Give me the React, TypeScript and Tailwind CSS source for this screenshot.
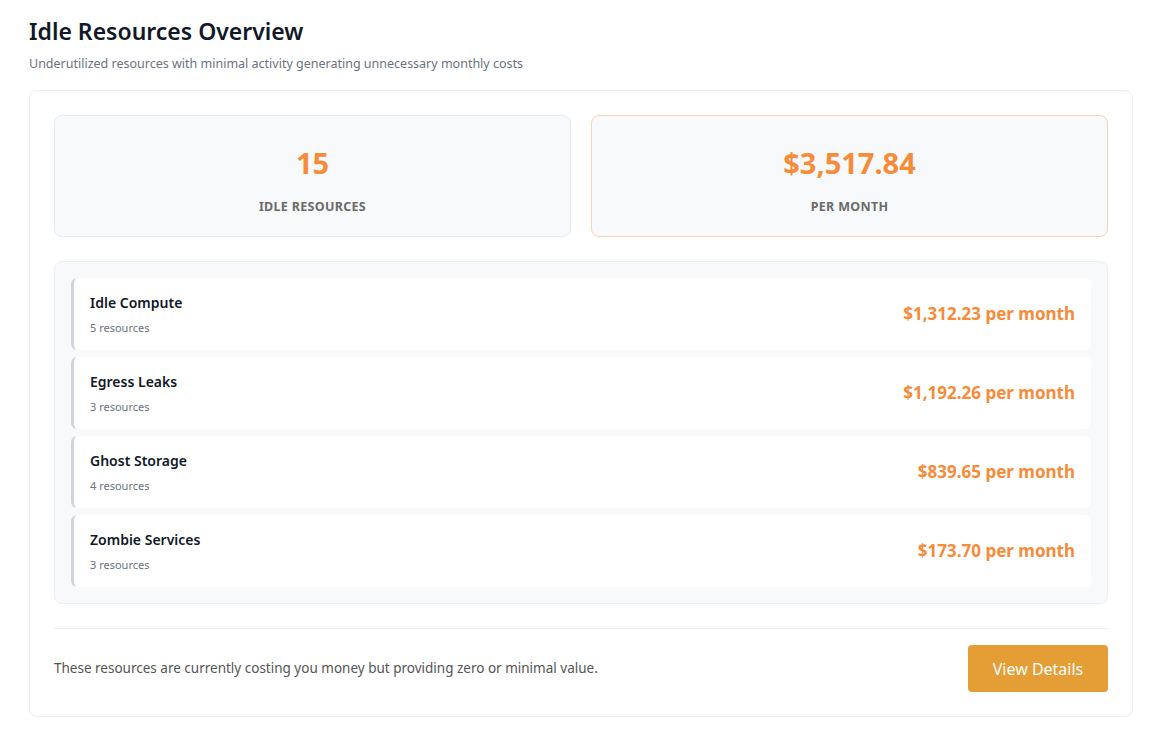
export default function App() {
  const rows = [
    { name: "Idle Compute", count: 5, cost: "$1,312.23" },
    { name: "Egress Leaks", count: 3, cost: "$1,192.26" },
    { name: "Ghost Storage", count: 4, cost: "$839.65" },
    { name: "Zombie Services", count: 3, cost: "$173.70" },
  ];
  return (
    <div className="min-h-screen bg-white px-[29px] pt-[16px] font-['Ubuntu','Noto_Sans',sans-serif]">
      <h1 className="text-[23px] font-semibold leading-[30px] text-[#111827]">Idle Resources Overview</h1>
      <p className="mt-[10px] text-[12.5px] leading-[16px] text-[#6b7280]">
        Underutilized resources with minimal activity generating unnecessary monthly costs
      </p>

      <div className="mt-[18px] rounded-lg border border-[#eceef1] p-[24px]">
        <div className="grid grid-cols-2 gap-[20px]">
          <div className="flex h-[122px] flex-col items-center justify-center rounded-lg border border-[#e8eaee] bg-[#f8f9fb] pt-[10px]">
            <div className="text-[29px] font-bold leading-[36px] text-[#f68b3a]">15</div>
            <div className="mt-[17px] text-[12.5px] font-bold tracking-wide text-[#6b6b6b]">IDLE RESOURCES</div>
          </div>
          <div className="flex h-[122px] flex-col items-center justify-center rounded-lg border border-[#fbd3b3] bg-[#f8f9fb] pt-[10px]">
            <div className="text-[29px] font-bold leading-[36px] text-[#f68b3a]">$3,517.84</div>
            <div className="mt-[17px] text-[12.5px] font-bold tracking-wide text-[#6b6b6b]">PER MONTH</div>
          </div>
        </div>

        <div className="mt-[24px] flex flex-col gap-[7px] rounded-lg border border-[#eceef1] bg-[#f8f9fb] p-[16px]">
          {rows.map((r) => (
            <div
              key={r.name}
              className="flex h-[72px] items-center justify-between rounded-md border-l-[3px] border-[#d1d5db] bg-white pl-[16px] pr-[16px]"
            >
              <div>
                <div className="text-[14px] font-semibold leading-[18px] text-[#111827]">{r.name}</div>
                <div className="mt-[9px] text-[11px] leading-[14px] text-[#6b7280]">{r.count} resources</div>
              </div>
              <div className="text-[17px] font-bold text-[#f68b3a]">{r.cost} per month</div>
            </div>
          ))}
        </div>

        <div className="mt-[24px] flex items-center justify-between border-t border-[#eceef1] pt-[16px]">
          <p className="text-[13.5px] text-[#555]">
            These resources are currently costing you money but providing zero or minimal value.
          </p>
          <button className="h-[47px] w-[140px] rounded bg-[#e59d35] text-[16px] text-white">View Details</button>
        </div>
      </div>
    </div>
  );
}
